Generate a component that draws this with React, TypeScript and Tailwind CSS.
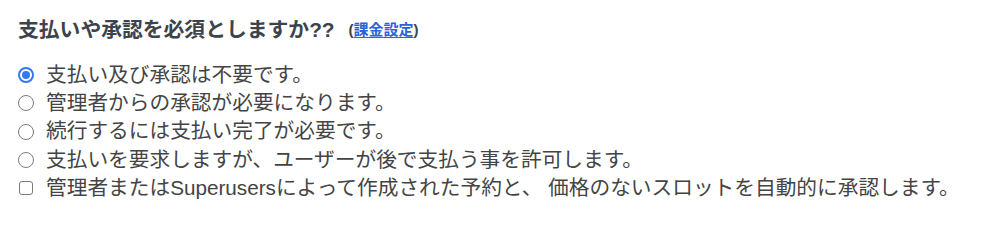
const options = [
  { type: 'radio', label: '支払い及び承認は不要です。', checked: true },
  { type: 'radio', label: '管理者からの承認が必要になります。', checked: false },
  { type: 'radio', label: '続行するには支払い完了が必要です。', checked: false },
  { type: 'radio', label: '支払いを要求しますが、ユーザーが後で支払う事を許可します。', checked: false },
  {
    type: 'checkbox',
    label: '管理者またはSuperusersによって作成された予約と、 価格のないスロットを自動的に承認します。',
    checked: false,
  },
];

function Radio({ checked }: { checked: boolean }) {
  if (checked) {
    return (
      <span className="flex h-4 w-4 shrink-0 items-center justify-center rounded-full border-[2px] border-[#3478f6] bg-white">
        <span className="h-[8px] w-[8px] rounded-full bg-[#3478f6]" />
      </span>
    );
  }
  return <span className="h-4 w-4 shrink-0 rounded-full border border-[#7a7a7a] bg-white" />;
}

function Checkbox() {
  return <span className="mx-[1px] h-[14px] w-[14px] shrink-0 rounded-[3px] border border-[#7a7a7a] bg-white" />;
}

export default function App() {
  return (
    <div
      className="h-[224px] w-[984px] bg-white pl-[18px] pt-[16px]"
      style={{ fontFamily: '"Liberation Sans", "Noto Sans CJK JP", sans-serif' }}
    >
      <div className="flex h-[28px] items-center text-[#3c434a]">
        <h2 className="text-[20.8px] font-bold">支払いや承認を必須としますか??</h2>
        <span className="ml-[14px] text-[15px] font-bold">
          (<a href="#" className="text-[#2b63d9] underline underline-offset-2">課金設定</a>)
        </span>
      </div>

      <ul className="mt-[17px] flex flex-col text-[20.7px] text-[#444]">
        {options.map((opt) => (
          <li key={opt.label} className="flex h-[28.3px] items-center gap-[12px]">
            {opt.type === 'radio' ? <Radio checked={opt.checked} /> : <Checkbox />}
            <span className="leading-none">{opt.label}</span>
          </li>
        ))}
      </ul>
    </div>
  );
}
